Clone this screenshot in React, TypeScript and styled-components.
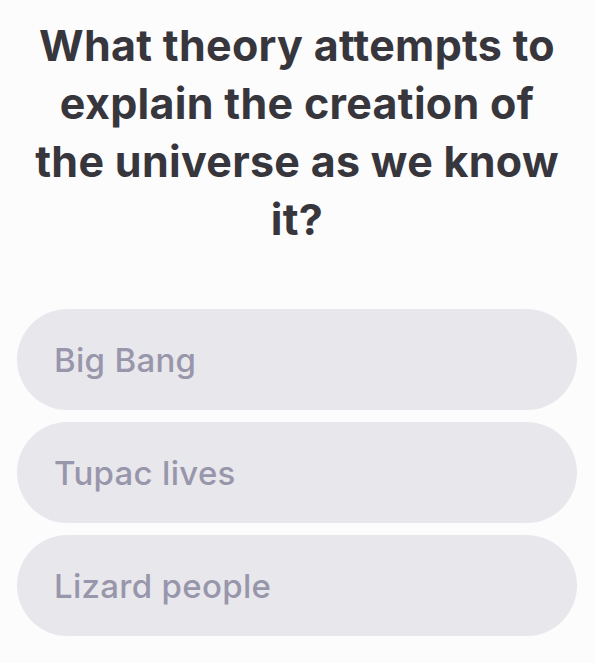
import React from "react";
import styled, { createGlobalStyle } from "styled-components";

const GlobalStyle = createGlobalStyle`
  html, body {
    margin: 0;
    padding: 0;
    background: #fcfcfd;
  }
  body {
    font-family: "Inter", "Noto Sans", sans-serif;
    -webkit-font-smoothing: antialiased;
  }
`;

const Page = styled.main`
  width: 595px;
  box-sizing: border-box;
  padding: 16px 18px 0 17px;
  display: flex;
  flex-direction: column;
`;

const Question = styled.h1`
  margin: 0 0 61px;
  font-family: "Inter", "Noto Sans", sans-serif;
  font-weight: 700;
  font-size: 43px;
  line-height: 58px;
  color: #37363c;
  text-align: center;
  letter-spacing: 0.3px;
`;

const Options = styled.div`
  display: flex;
  flex-direction: column;
  gap: 12px;
`;

const Option = styled.button`
  display: flex;
  align-items: center;
  height: 101px;
  width: 100%;
  box-sizing: border-box;
  padding: 0 0 0 37px;
  border: none;
  border-radius: 51px;
  background: #e8e7ec;
  color: #9896ab;
  font-family: "Inter", "Noto Sans", sans-serif;
  font-weight: 500;
  font-size: 33px;
  letter-spacing: 0.3px;
  text-align: left;
  cursor: pointer;
`;

const answers = ["Big Bang", "Tupac lives", "Lizard people"];

export default function App() {
  return (
    <>
      <GlobalStyle />
      <Page>
        <Question>
          What theory attempts to
          <br />
          explain the creation of
          <br />
          the universe as we know
          <br />
          it?
        </Question>
        <Options>
          {answers.map((a) => (
            <Option key={a}>{a}</Option>
          ))}
        </Options>
      </Page>
    </>
  );
}
